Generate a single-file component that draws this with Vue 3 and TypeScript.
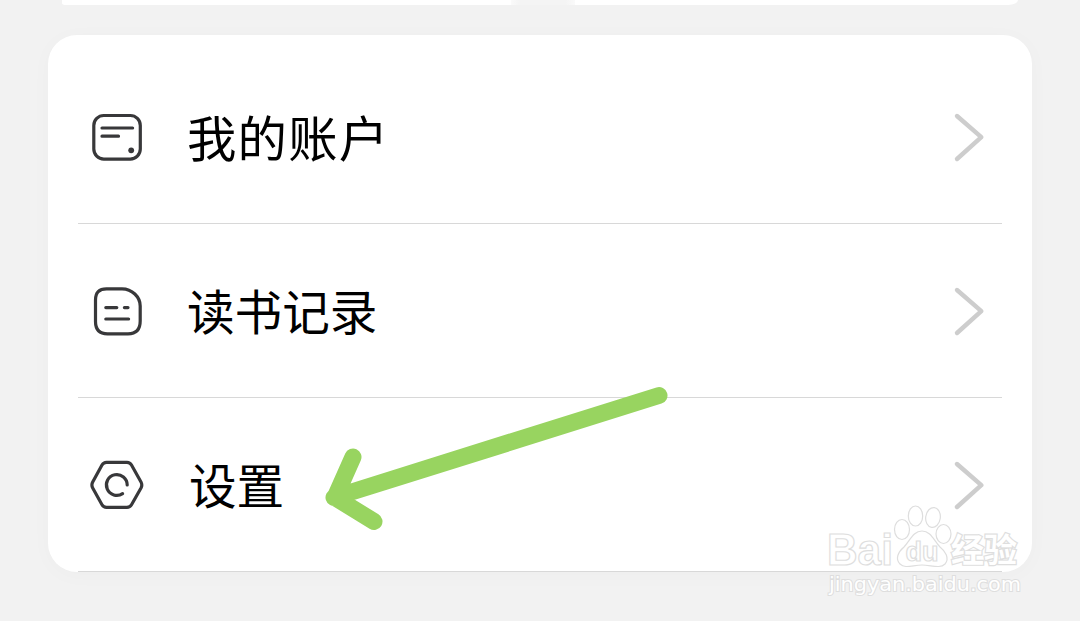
<script setup lang="ts">
type IconName = 'account' | 'record' | 'settings'

interface MenuRow {
  icon: IconName
  label: string
}

const rows: MenuRow[] = [
  { icon: 'account', label: '我的账户' },
  { icon: 'record', label: '读书记录' },
  { icon: 'settings', label: '设置' },
]
</script>

<template>
  <main class="page">
    <div class="previous-card"><span class="notch"></span></div>
    <nav class="card">
      <a v-for="row in rows" :key="row.icon" class="row">
        <svg class="icon" viewBox="0 0 56 56" aria-hidden="true">
          <g v-if="row.icon === 'account'">
            <rect x="5.8" y="6.5" width="46.5" height="43.6" rx="10" />
            <path d="M14 19H44.6M14 27.2H30.5" />
            <circle class="dot" cx="43.2" cy="41.3" r="2.9" />
          </g>
          <g v-else-if="row.icon === 'record'">
            <path d="M18.5 5.8H34C44 5.8 52.2 14 52.2 23V38Q52.2 50.8 40 50.8H19.5Q7.5 50.8 7.5 38.5V17Q7.5 5.8 18.5 5.8Z" />
            <path d="M17.8 24.6H28.8M36.4 24.6H40M17.8 36H40.6" />
          </g>
          <g v-else>
            <path d="M18.5 5.3H39Q42 5.3 43.5 8L53 25Q54.6 28 53 31L43.5 47.7Q42 50.3 39 50.3H18.5Q15.5 50.3 14 47.7L4.7 31Q3.1 28 4.7 25L14 8Q15.5 5.3 18.5 5.3Z" />
            <path d="M39.2 28A10.4 10.4 0 1 0 34.6 36.6" />
          </g>
        </svg>
        <span class="label" :class="row.icon">{{ row.label }}</span>
        <svg class="chevron" viewBox="0 0 34 52" aria-hidden="true">
          <path d="M5 5L29.3 26.2L5 48" />
        </svg>
      </a>
    </nav>

    <svg class="arrow" viewBox="0 0 360 160" aria-hidden="true">
      <path d="M349 15.5L24 117.5M43 77L25 117.5L64 141.5" />
    </svg>

    <svg class="watermark" viewBox="0 0 210 100" aria-label="Baidu 经验">
      <g class="outlined">
        <text class="latin" x="7" y="65" textLength="66" lengthAdjust="spacingAndGlyphs">Bai</text>
        <ellipse cx="82" cy="29.5" rx="7.5" ry="10" />
        <ellipse cx="95.5" cy="16" rx="7.2" ry="10" />
        <ellipse cx="113" cy="17.5" rx="7.3" ry="10" transform="rotate(8 113 17.5)" />
        <ellipse cx="123.5" cy="34" rx="7.5" ry="9.5" />
        <path d="M102 31C93 31 90 41 84 47C78 52 75 59 80 64C85 69 93 65 102 65C111 65 120 69 125 64C130 58 125 51 120 47C114 41 111 31 102 31Z" />
        <text class="du" x="85.5" y="61" textLength="33" lengthAdjust="spacingAndGlyphs">du</text>
        <text class="cjk" x="131" y="61.5" textLength="66" lengthAdjust="spacingAndGlyphs">经验</text>
      </g>
      <text class="address" x="9" y="91" textLength="192" lengthAdjust="spacingAndGlyphs">jingyan.baidu.com</text>
    </svg>
  </main>
</template>

<style>
html,
body {
  margin: 0;
  background: #f2f2f2;
}
</style>

<style scoped>
.page {
  position: relative;
  width: 1080px;
  height: 621px;
  overflow: hidden;
  background: #f2f2f2;
  font-family: 'Noto Sans CJK SC', 'Noto Sans', sans-serif;
}
.previous-card {
  display: flex;
  justify-content: center;
  width: 956px;
  height: 5px;
  margin: 0 auto 30px;
  background: #fff;
  border-radius: 0 0 10px 4px / 0 0 5px 2px;
}
.notch {
  width: 64px;
  height: 5px;
  margin-left: 6px;
  background: linear-gradient(90deg, #fafafa, #f4f4f4 15%, #f4f4f4 85%, #fafafa);
}
.card {
  box-sizing: border-box;
  width: 984px;
  height: 537px;
  margin: 0 auto;
  padding: 15px 30px 0;
  background: #fff;
  border-radius: 29px;
  box-shadow: 0 3px 22px rgb(0 0 0 / 2.5%);
}
.row {
  box-sizing: border-box;
  display: flex;
  align-items: center;
  height: 174px;
  padding: 0 16px 0 10px;
  border-bottom: 1px solid #d8d8d8;
}
.icon {
  width: 56px;
  height: 56px;
  fill: none;
  stroke: #38383a;
  stroke-width: 3.2;
  stroke-linecap: round;
  stroke-linejoin: round;
}
.icon .dot {
  fill: #38383a;
  stroke: none;
}
.label {
  margin-left: 43px;
  padding-bottom: 2px;
  color: #000;
  font-size: 49.4px;
  letter-spacing: 1.2px;
  line-height: 72px;
  white-space: nowrap;
}
.label.record,
.label.settings {
  font-size: 47.6px;
  letter-spacing: 0;
}
.label.settings {
  margin-left: 45px;
}
.chevron {
  width: 34px;
  height: 52px;
  margin-left: auto;
  fill: none;
  stroke: #cdcdcd;
  stroke-width: 4.4;
  stroke-linecap: round;
  stroke-linejoin: round;
}
.arrow {
  position: absolute;
  top: 380px;
  left: 310px;
  width: 360px;
  height: 160px;
  fill: none;
  stroke: #98d460;
  stroke-width: 17;
  stroke-linecap: round;
  stroke-linejoin: round;
}
.watermark {
  position: absolute;
  top: 500px;
  left: 820px;
  width: 210px;
  height: 100px;
}
.outlined {
  fill: #fff;
  stroke: #dedede;
  stroke-width: 1.2;
}
.latin {
  font-family: 'Liberation Sans', sans-serif;
  font-size: 44px;
  font-weight: 700;
}
.du {
  font-family: 'Liberation Sans', sans-serif;
  font-size: 27px;
  font-weight: 700;
}
.cjk {
  font-size: 33px;
  font-weight: 700;
  stroke-width: 2.4;
  paint-order: stroke;
}
.address {
  font-family: 'DejaVu Sans', sans-serif;
  font-size: 20px;
  fill: #fff;
  stroke: #dedede;
  stroke-width: 2;
  paint-order: stroke;
}
</style>
